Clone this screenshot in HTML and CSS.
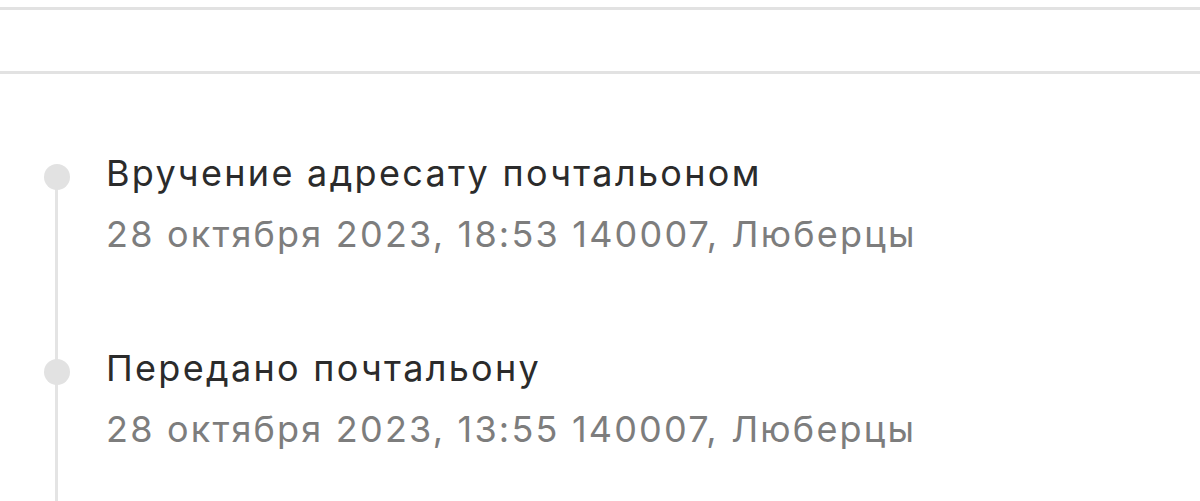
FILE: index.html
```html
<!DOCTYPE html>
<html lang="ru">
<head>
<meta charset="utf-8">
<link rel="stylesheet" href="styles.css">
</head>
<body>
<div class="page">
  <div class="rule"></div>
  <div class="band"></div>
  <div class="rule"></div>
  <ul class="timeline">
    <li class="event first">
      <span class="dot"></span>
      <div class="title">Вручение адресату почтальоном</div>
      <div class="meta">28 октября 2023, 18:53 140007, Люберцы</div>
    </li>
    <li class="event">
      <span class="dot"></span>
      <div class="title">Передано почтальону</div>
      <div class="meta">28 октября 2023, 13:55 140007, Люберцы</div>
    </li>
  </ul>
</div>
</body>
</html>
```
FILE: styles.css
```css
html, body {
  margin: 0;
  padding: 0;
  background: #ffffff;
}
.page {
  width: 1200px;
  height: 501px;
  overflow: hidden;
  padding-top: 7px;
  box-sizing: border-box;
  font-family: Inter, "Noto Sans", sans-serif;
}
.rule {
  height: 3px;
  background: #e2e2e2;
}
.band {
  height: 61px;
}
.timeline {
  list-style: none;
  margin: 0;
  padding: 69px 0 0 0;
}
.event {
  position: relative;
  padding-left: 106px;
  height: 195px;
}
.event::before {
  content: "";
  position: absolute;
  left: 55px;
  top: 0;
  bottom: 0;
  width: 3px;
  background: #e4e4e4;
}
.event.first::before {
  top: 34px;
}
.dot {
  position: absolute;
  left: 44px;
  top: 21px;
  width: 26px;
  height: 26px;
  border-radius: 50%;
  background: #e2e2e2;
}
.title {
  font-size: 36px;
  line-height: 61px;
  letter-spacing: 2.3px;
  color: #2b2b2b;
}
.meta {
  font-size: 36px;
  line-height: 61px;
  letter-spacing: 2.2px;
  color: #7d7d7d;
}
```
